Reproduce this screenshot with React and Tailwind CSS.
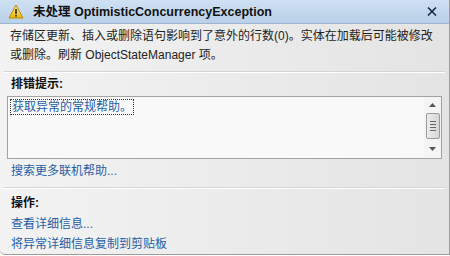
import React from 'react';

function WarningIcon() {
  return (
    <svg width="16" height="15" viewBox="0 0 16 15">
      <defs>
        <linearGradient id="wg" x1="0" y1="0" x2="0" y2="1">
          <stop offset="0" stopColor="#fff2a0" />
          <stop offset="1" stopColor="#e8b400" />
        </linearGradient>
      </defs>
      <path d="M8 1 L15 14 L1 14 Z" fill="url(#wg)" stroke="#c08a00" strokeWidth="1" strokeLinejoin="round" />
      <rect x="7.2" y="5" width="1.6" height="5" fill="#222" />
      <rect x="7.2" y="11" width="1.6" height="1.6" fill="#222" />
    </svg>
  );
}

function CloseIcon() {
  return (
    <svg width="10" height="9" viewBox="0 0 10 9">
      <path d="M1 0.5 L9 8.5 M9 0.5 L1 8.5" stroke="#1d2a44" strokeWidth="1.6" />
    </svg>
  );
}

function Scrollbar() {
  return (
    <div className="w-[17px] flex flex-col items-center bg-[#f4f4f4] py-[3px]">
      <svg width="7" height="4" viewBox="0 0 7 4" className="mt-[3px]">
        <path d="M0 4 L3.5 0 L7 4 Z" fill="#555" />
      </svg>
      <div className="mt-[6px] w-[14px] h-[26px] border border-[#9a9a9a] rounded-[2px] bg-gradient-to-r from-[#ececec] to-[#d6d6d6] flex flex-col items-center justify-center gap-[2px]">
        <div className="w-[6px] h-px bg-[#666]" />
        <div className="w-[6px] h-px bg-[#666]" />
        <div className="w-[6px] h-px bg-[#666]" />
        <div className="w-[6px] h-px bg-[#666]" />
      </div>
      <svg width="7" height="4" viewBox="0 0 7 4" className="mt-auto mb-[4px]">
        <path d="M0 0 L3.5 4 L7 0 Z" fill="#555" />
      </svg>
    </div>
  );
}

function Separator() {
  return (
    <div className="mx-[4px]">
      <div className="h-px bg-[#d4d4d4]" />
      <div className="h-px bg-white" />
    </div>
  );
}

export default function App() {
  return (
    <div
      className="w-[450px] h-[256px] overflow-hidden bg-white text-[12px] text-[#1e1e1e]"
      style={{ fontFamily: '"Liberation Sans", "Noto Sans CJK SC", sans-serif' }}
    >
      <div className="h-[255px] flex flex-col bg-gradient-to-r from-[#f3f3f3] to-[#e4e4e4] border-r border-b border-[#9c9c9c] rounded-bl-[5px]">
        {/* title bar */}
        <div className="h-[25px] flex items-center pl-[8px] pr-[9px] bg-gradient-to-b from-[#cfe0f2] to-[#b9d0e9] border-b border-[#9db3cf]">
          <WarningIcon />
          <span className="ml-[9px] font-bold text-[12.5px] leading-[18px] text-[#111]">未处理 OptimisticConcurrencyException</span>
          <span className="ml-auto mr-[3px] flex items-center">
            <CloseIcon />
          </span>
        </div>

        {/* message */}
        <div className="pl-[10px] pr-[8px] pt-[3px] leading-[19px] text-[12px] text-[#222]">
          <div>存储区更新、插入或删除语句影响到了意外的行数(0)。实体在加载后可能被修改</div>
          <div>或删除。刷新 ObjectStateManager 项。</div>
        </div>

        <div className="mt-[6px]">
          <Separator />
        </div>

        {/* tips */}
        <div className="pl-[11px] pt-[2px] font-bold leading-[19px] text-[#111]">排错提示:</div>
        <div className="mx-[7px] mt-[2px] h-[65px] flex border border-[#a3a3a3] bg-[#f9f9f9]">
          <div className="flex-1 pl-[2px] pt-[1px]">
            <span className="inline-block border border-dotted border-[#333] px-[1px] leading-[14px] text-[#1f5fa6]">获取异常的常规帮助。</span>
          </div>
          <Scrollbar />
        </div>
        <div className="pl-[11px] pt-[3px] leading-[19px] text-[#1f5fa6]">搜索更多联机帮助...</div>

        <div className="mt-[6px]">
          <Separator />
        </div>

        {/* actions */}
        <div className="pl-[11px] pt-[5px] font-bold leading-[19px] text-[#111]">操作:</div>
        <div className="pl-[11px] pt-[1px] leading-[20px] text-[#1f5fa6]">查看详细信息...</div>
        <div className="pl-[11px] leading-[20px] text-[#1f5fa6]">将异常详细信息复制到剪贴板</div>
      </div>
    </div>
  );
}
